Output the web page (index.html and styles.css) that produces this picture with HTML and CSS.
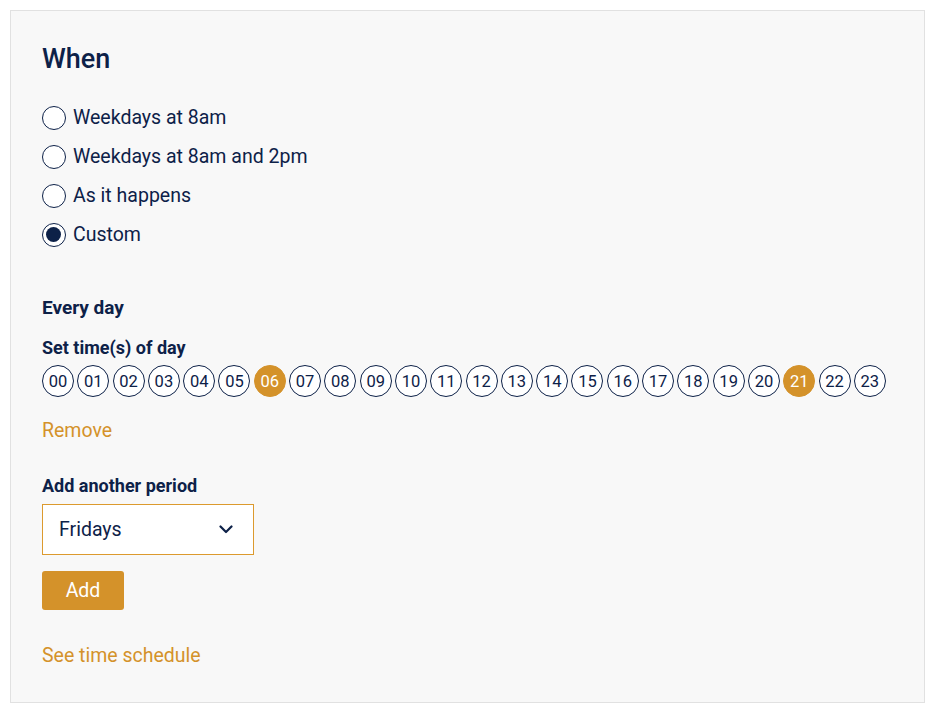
FILE: index.html
```html
<!DOCTYPE html>
<html>
<head>
<meta charset="utf-8">
<link rel="stylesheet" href="styles.css">
</head>
<body>
<div class="panel">
  <h2 class="title">When</h2>
  <div class="radios">
    <label class="radio"><span class="dot"></span>Weekdays at 8am</label>
    <label class="radio"><span class="dot"></span>Weekdays at 8am and 2pm</label>
    <label class="radio"><span class="dot"></span>As it happens</label>
    <label class="radio"><span class="dot checked"></span>Custom</label>
  </div>
  <div class="period-title">Every day</div>
  <div class="label">Set time(s) of day</div>
  <div class="hours">
    <span class="hour">00</span><span class="hour">01</span><span class="hour">02</span><span class="hour">03</span><span class="hour">04</span><span class="hour">05</span><span class="hour on">06</span><span class="hour">07</span><span class="hour">08</span><span class="hour">09</span><span class="hour">10</span><span class="hour">11</span><span class="hour">12</span><span class="hour">13</span><span class="hour">14</span><span class="hour">15</span><span class="hour">16</span><span class="hour">17</span><span class="hour">18</span><span class="hour">19</span><span class="hour">20</span><span class="hour on">21</span><span class="hour">22</span><span class="hour">23</span>
  </div>
  <a class="link remove">Remove</a>
  <div class="label add-label">Add another period</div>
  <div class="select">
    <span>Fridays</span>
    <svg width="14" height="9" viewBox="0 0 14 9"><path d="M1.5 1.5 L7 7 L12.5 1.5" fill="none" stroke="#0d2148" stroke-width="2.2" stroke-linecap="round" stroke-linejoin="round"/></svg>
  </div>
  <button class="btn">Add</button>
  <a class="link schedule">See time schedule</a>
</div>
</body>
</html>
```
FILE: styles.css
```css
html, body {
  margin: 0;
  padding: 0;
  background: #ffffff;
}
body {
  padding: 10px 0 0 10px;
  font-family: Roboto, "Liberation Sans", sans-serif;
  color: #0d2148;
}
.panel {
  box-sizing: border-box;
  width: 915px;
  height: 693px;
  background: #f8f8f8;
  border: 1px solid #e1e1e1;
  padding: 31px 31px;
  display: flex;
  flex-direction: column;
  align-items: flex-start;
}
.title {
  margin: 0;
  font-size: 27px;
  font-weight: 500;
  line-height: 34px;
}
.radios {
  margin-top: 30px;
  display: flex;
  flex-direction: column;
  gap: 15px;
}
.radio {
  display: flex;
  align-items: center;
  font-size: 19.5px;
  line-height: 24px;
}
.dot {
  box-sizing: border-box;
  width: 24px;
  height: 24px;
  border: 1.7px solid #0d2148;
  border-radius: 50%;
  background: #fff;
  margin-right: 7px;
  position: relative;
}
.dot.checked::after {
  content: "";
  position: absolute;
  left: 2.5px;
  top: 2.5px;
  width: 15.6px;
  height: 15.6px;
  border-radius: 50%;
  background: #0d2148;
}
.period-title {
  margin-top: 49px;
  font-size: 19px;
  font-weight: 700;
  line-height: 24px;
}
.label {
  font-size: 18px;
  font-weight: 700;
  line-height: 22px;
}
.period-title + .label {
  margin-top: 17px;
}
.hours {
  margin-top: 6px;
  display: flex;
  gap: 3.3px;
}
.hour {
  box-sizing: border-box;
  width: 32px;
  height: 32px;
  border: 1.5px solid #0d2148;
  border-radius: 50%;
  display: flex;
  align-items: center;
  justify-content: center;
  font-size: 16.5px;
  background: #fff;
}
.hour.on {
  background: #d4922a;
  border-color: #d4922a;
  color: #fff;
}
.link {
  color: #d4922a;
  font-size: 19.5px;
  line-height: 24px;
  cursor: pointer;
}
.remove {
  margin-top: 22px;
}
.add-label {
  margin-top: 32px;
}
.select {
  box-sizing: border-box;
  margin-top: 7px;
  width: 212px;
  height: 51px;
  border: 1px solid #dc9a2e;
  background: #fff;
  display: flex;
  align-items: center;
  justify-content: space-between;
  padding: 0 20px 0 16px;
  font-size: 19.5px;
}
.btn {
  margin-top: 16px;
  width: 82px;
  height: 39px;
  border: none;
  border-radius: 3px;
  background: #d4922a;
  color: #fff;
  font-family: inherit;
  font-size: 19.5px;
  padding: 0;
}
.schedule {
  margin-top: 34px;
}
```
